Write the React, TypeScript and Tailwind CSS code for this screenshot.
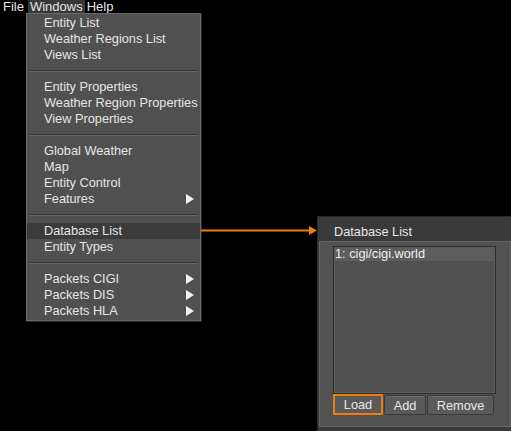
import React from 'react';

type Item = { label: string; sub?: boolean; active?: boolean } | 'sep';

const items: Item[] = [
  { label: 'Entity List' },
  { label: 'Weather Regions List' },
  { label: 'Views List' },
  'sep',
  { label: 'Entity Properties' },
  { label: 'Weather Region Properties' },
  { label: 'View Properties' },
  'sep',
  { label: 'Global Weather' },
  { label: 'Map' },
  { label: 'Entity Control' },
  { label: 'Features', sub: true },
  'sep',
  { label: 'Database List', active: true },
  { label: 'Entity Types' },
  'sep',
  { label: 'Packets CIGI', sub: true },
  { label: 'Packets DIS', sub: true },
  { label: 'Packets HLA', sub: true },
];

function SubArrow() {
  return (
    <svg width="8" height="10" viewBox="0 0 8 10" className="mr-[3px] shrink-0">
      <path d="M0 0 L8 5 L0 10 Z" fill="#f0f0f0" />
    </svg>
  );
}

export default function App() {
  return (
    <div
      className="relative w-[511px] h-[431px] bg-black overflow-hidden text-[12.75px] text-[#e6e6e6]"
      style={{ fontFamily: '"Liberation Sans", Arial, sans-serif' }}
    >
      {/* menu bar */}
      <div className="flex h-[14px] items-center leading-[14px] whitespace-nowrap text-[13px]">
        <span className="pl-[3px] pr-[4px]">File</span>
        <span className="px-[2px] bg-[#383838]">Windows</span>
        <span className="pl-[2px]">Help</span>
      </div>

      {/* dropdown */}
      <div className="absolute left-[26px] top-[13px] w-[175px] h-[308px] bg-[#505050] border border-[#6a6a6a] shadow-[1px_1px_0_#2a2a2a] py-px">
        {items.map((it, i) =>
          it === 'sep' ? (
            <div key={i} className="h-4 flex items-center px-[2px]">
              <div className="w-full h-[2px] border-t border-[#343434] border-b border-b-[#666]" />
            </div>
          ) : (
            <div
              key={i}
              className={`h-4 flex items-center justify-between pl-[17px] pr-[3px] whitespace-nowrap ${it.active ? 'bg-[#3b3b3b]' : ''}`}
            >
              <span className="leading-4">{it.label}</span>
              {it.sub && <SubArrow />}
            </div>
          )
        )}
      </div>

      {/* pointer arrow */}
      <svg className="absolute left-[201px] top-[225px]" width="118" height="11" viewBox="0 0 118 11">
        <line x1="0" y1="5.5" x2="110" y2="5.5" stroke="#f07d10" strokeWidth="2" />
        <path d="M108 1 L116 5.5 L108 10 Z" fill="#f07d10" />
      </svg>

      {/* database list window */}
      <div className="absolute left-[317px] top-[216px] w-[196px] h-[220px] bg-[#3a3a3a] border border-[#2a2a2a] p-px">
        <div className="h-[23px] flex items-center pt-[4px] pl-[15px] text-[#e8e8e8] whitespace-nowrap">Database List</div>
        <div className="bg-[#525252] border border-[#646464] h-[186px] pt-[4px] pl-[13px] pr-[14px] flex flex-col">
          <div className="h-[148px] border border-[#2c2c2c] bg-[#505050] shadow-[inset_0_0_0_1px_#5e5e5e]">
            <div className="h-[14px] bg-[#5d5d5d] leading-[14px] pl-px text-[#f0f0f0] whitespace-nowrap">1: cigi/cigi.world</div>
          </div>
          <div className="flex gap-px">
            <button className="w-[50px] h-[21px] border-2 border-[#f07d10] bg-[#5a5a5a] text-[#e8e8e8] leading-[16px]">
              Load
            </button>
            <button className="w-[42px] h-[20px] mt-px border border-[#3a3a3a] rounded-[2px] bg-[#5a5a5a] text-[#e8e8e8] shadow-[inset_0_1px_0_#6a6a6a]">
              Add
            </button>
            <button className="w-[67px] h-[20px] mt-px border border-[#3a3a3a] rounded-[2px] bg-[#5a5a5a] text-[#e8e8e8] shadow-[inset_0_1px_0_#6a6a6a]">
              Remove
            </button>
          </div>
        </div>
      </div>
    </div>
  );
}
